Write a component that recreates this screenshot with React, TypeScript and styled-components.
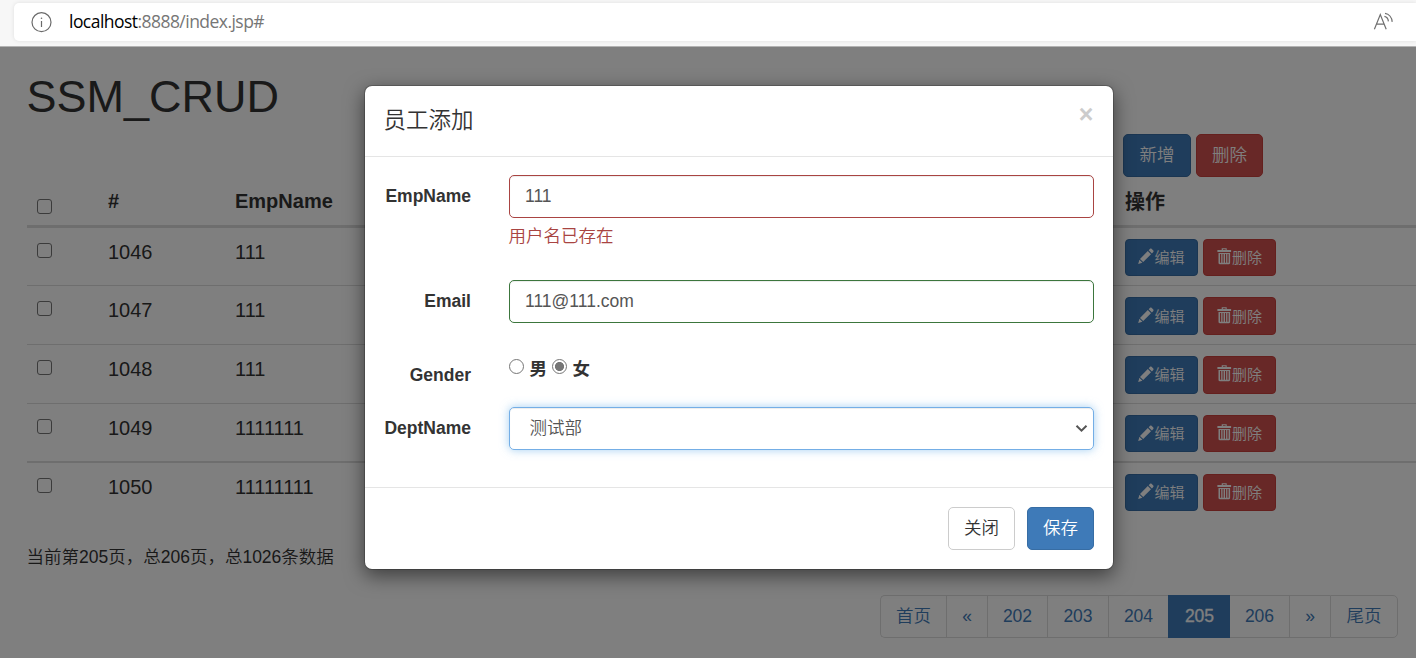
import React from "react";
import styled, { createGlobalStyle, css } from "styled-components";

const GlobalStyle = createGlobalStyle`
  * { box-sizing: border-box; }
  html, body { margin: 0; padding: 0; }
  body {
    width: 1416px;
    height: 658px;
    overflow: hidden;
    background: #fff;
    color: #333;
    font-family: "Liberation Sans", "Noto Sans CJK SC", sans-serif;
    font-size: 17.5px;
    line-height: 25px;
  }
  button, input { font-family: inherit; }
`;

type Tone = "primary" | "danger" | "plain";

const tones = {
  primary: css`background: #3e7ab8; border-color: #376da4; color: #fff;`,
  danger: css`background: #d1514f; border-color: #c9403d; color: #fff;`,
  plain: css`background: #fff; border-color: #ccc; color: #333;`,
};

const Window = styled.div`
  display: flex;
  flex-direction: column;
  width: 1416px;
  height: 658px;
  overflow: hidden;
`;

const BrowserBar = styled.header`
  flex: none;
  height: 47px;
  padding: 3px 0 0 14px;
  background: #f7f7f7;
  border-bottom: 1px solid #b3b3b3;
`;

const AddressField = styled.div`
  display: flex;
  align-items: center;
  height: 38px;
  padding: 0 22px 0 17px;
  background: #fff;
  border-radius: 5px 0 0 5px;
  box-shadow: 0 0 4px rgba(0, 0, 0, 0.1);
`;

const Url = styled.span`
  flex: 1;
  margin: -2px 0 0 17px;
  font-family: "Open Sans", sans-serif;
  font-size: 17.5px;
  letter-spacing: -0.54px;
  color: #767676;
  b { font-weight: 400; color: #000; }
`;

const Viewport = styled.main`
  position: relative;
  flex: 1;
  overflow: hidden;
`;

const Page = styled.div`
  padding: 25px 0 0 27px;
`;

const PageTitle = styled.h1`
  margin: 0 0 0 -0.5px;
  height: 62px;
  font-size: 45px;
  font-weight: 400;
  line-height: 49.5px;
`;

const PageActions = styled.div`
  display: flex;
  gap: 5px;
  padding-left: 1096px;
`;

const Button = styled.button<{ $tone: Tone; $wide?: boolean }>`
  width: ${(p) => (p.$wide ? 68 : 67)}px;
  height: 43px;
  padding: 0 0 1px;
  border: 1px solid;
  border-radius: 5px;
  font-size: 17.5px;
  line-height: 25px;
  font-weight: 350;
  ${(p) => tones[p.$tone]}
`;

const SmallButton = styled(Button)`
  display: flex;
  align-items: center;
  justify-content: center;
  width: 73px;
  height: 37.5px;
  padding: 0;
  border-radius: 4px;
  font-size: 15px;
  svg { margin-top: -2px; }
`;

const columns = css`
  display: grid;
  grid-template-columns: 71px 127px 890px 1fr;
  font-size: 20px;
  line-height: 28.5px;
`;

const HeadRow = styled.div`
  ${columns}
  height: 51px;
  padding-top: 10px;
  border-bottom: 3px solid #ddd;
  font-weight: 700;
`;

const Row = styled.div<{ $first?: boolean; $thick?: boolean }>`
  ${columns}
  height: ${(p) => (p.$first ? 57 : 58.75)}px;
  padding-top: ${(p) => (p.$first ? 9.5 : p.$thick ? 9.25 : 10.25)}px;
  border-top: ${(p) => (p.$first ? 0 : p.$thick ? 2 : 1)}px solid #ddd;
`;

const Cell = styled.div`
  padding-left: 10px;
`;

const ActionsHeading = styled(Cell)`
  padding-top: 1px;
`;

const CheckBox = styled.input.attrs({ type: "checkbox" })<{ $head?: boolean }>`
  display: block;
  appearance: none;
  width: 15px;
  height: 15px;
  margin: ${(p) => (p.$head ? 12 : 5)}px 0 0;
  background: #fff;
  border: 1px solid #767676;
  border-radius: 3px;
`;

const RowActions = styled(Cell)`
  display: flex;
  gap: 5px;
  padding-top: 1.2px;
`;

const Summary = styled.p`
  margin: 25px 0 0 -0.5px;
  height: 50px;
  font-weight: 350;
`;

const Pagination = styled.nav`
  display: flex;
  width: 518px;
  margin: 0 0 0 853px;
`;

const PageLink = styled.a<{ $w: number; $active?: boolean }>`
  width: ${(p) => p.$w}px;
  height: 43px;
  line-height: 41px;
  text-align: center;
  font-weight: 350;
  color: #3e7ab8;
  border: 1px solid #ddd;
  border-right-width: 0;
  &:first-child { border-radius: 5px 0 0 5px; }
  &:last-child { border-radius: 0 5px 5px 0; border-right-width: 1px; }
  ${(p) =>
    p.$active &&
    css`
      background: #3e7ab8;
      border-color: #3e7ab8;
      color: #fff;
      -webkit-text-stroke: 0.3px #fff;
      & + a { border-left-width: 0; }
    `}
`;

const Backdrop = styled.div`
  position: absolute;
  inset: 0;
  display: flex;
  align-items: flex-start;
  padding: 38px 0 0 364px;
  background: rgba(0, 0, 0, 0.5);
`;

const Modal = styled.section`
  width: 750px;
  background: #fff;
  background-clip: padding-box;
  border: 1px solid rgba(0, 0, 0, 0.2);
  border-radius: 8px;
  box-shadow: 0 6px 19px rgba(0, 0, 0, 0.5);
`;

const ModalHeader = styled.div`
  display: flex;
  justify-content: space-between;
  height: 71px;
  padding: 19px 19px 0 18.5px;
  border-bottom: 1px solid #e5e5e5;
`;

const ModalTitle = styled.h4`
  margin: 0;
  font-size: 22.5px;
  font-weight: 350;
  line-height: 32px;
`;

const Close = styled.button`
  width: 16px;
  height: 26px;
  margin-top: -4px;
  padding: 0;
  border: 0;
  background: none;
  color: #ccc;
  font-size: 25px;
  font-weight: 700;
  line-height: 26px;
`;

const Form = styled.form`
  height: 330px;
  padding: 18px 19px 0;
`;

const Field = styled.div<{ $h: number }>`
  display: flex;
  height: ${(p) => p.$h}px;
`;

const Label = styled.label<{ $drop?: boolean }>`
  width: 87px;
  margin-right: 38px;
  padding-top: ${(p) => (p.$drop ? 10 : 9)}px;
  text-align: right;
  font-weight: 700;
`;

const Control = styled.div`
  flex: 1;
`;

const TextInput = styled.input<{ $color: string }>`
  display: block;
  width: 100%;
  height: 43px;
  padding: 0 15px;
  border: 1px solid ${(p) => p.$color};
  border-radius: 5px;
  box-shadow: inset 0 1px 1px rgba(0, 0, 0, 0.075);
  color: #555;
  font-size: 17.5px;
`;

const HelpText = styled.span`
  display: block;
  margin: 6px 0 0 -0.5px;
  color: #a94442;
  font-weight: 350;
`;

const RadioGroup = styled.div`
  display: flex;
  height: 25px;
  margin-top: 4px;
  font-weight: 700;
`;

const RadioOption = styled.label`
  display: flex;
  width: 43px;
`;

const Radio = styled.input.attrs({ type: "radio" })`
  appearance: none;
  flex: none;
  width: 15px;
  height: 15px;
  margin: 2px 5.5px 0 0;
  border: 1px solid #767676;
  border-radius: 50%;
  &:checked { background: radial-gradient(circle, #767676 4.2px, #fff 4.9px); }
`;

const Select = styled.div`
  display: flex;
  align-items: center;
  justify-content: space-between;
  height: 43px;
  padding: 0 5px 1px 19.5px;
  border: 1px solid #74aee6;
  border-radius: 5px;
  box-shadow: inset 0 1px 1px rgba(0, 0, 0, 0.075), 0 0 10px rgba(102, 175, 233, 0.6);
  color: #555;
  font-weight: 350;
`;

const ModalFooter = styled.div`
  display: flex;
  justify-content: flex-end;
  gap: 12px;
  height: 82px;
  padding: 19px 19px 0;
  border-top: 1px solid #e5e5e5;
`;

const InfoIcon = () => (
  <svg width="21" height="21" viewBox="0 0 21 21" fill="none" stroke="#6a6a6a" strokeWidth="1.2">
    <circle cx="10.5" cy="10.2" r="9.5" />
    <path d="M10.5 9v6" />
    <circle cx="10.5" cy="6.3" r=".8" fill="#6a6a6a" stroke="none" />
  </svg>
);

const ReadAloudIcon = () => (
  <svg width="21" height="20" viewBox="0 0 21 20" fill="none" stroke="#6f6f6f" strokeWidth="1.2">
    <path d="M1.4 17.3 7.3 2.6l5.9 14.7M3.4 12.2h7.8" />
    <path d="M11.4 4.4c2.2.5 3.8 2.4 4 5M12 1.3c3.9.6 6.9 4 7.2 8.6" />
  </svg>
);

const PencilIcon = () => (
  <svg width="16" height="16" viewBox="0 0 16 16" fill="currentColor">
    <path d="M12.1.8c.4-.4 1-.4 1.4 0l1.8 1.8c.4.4.4 1 0 1.4l-1.4 1.4-3.2-3.2zM9.8 3.1 13 6.3l-7.8 7.8L2 10.9zM1.4 11.7l3 3L.2 15.9z" />
  </svg>
);

const TrashIcon = () => (
  <svg width="15" height="17" viewBox="0 0 15 17" fill="currentColor" fillRule="evenodd">
    <path d="M.4 2h4.3V.3h5V2h4.4v2H.4zM5.9 1.3V2h2.7v-.7zM1.5 5h11.6v10c0 .7-.5 1.2-1.2 1.2H2.7c-.7 0-1.2-.5-1.2-1.2zM3 6v8.8h1.2V6zm2.5 0v8.8h1.1V6zM8 6v8.8h1.1V6zm2.4 0v8.8h1.2V6z" />
  </svg>
);

const Chevron = () => (
  <svg width="13" height="9" viewBox="0 0 13 9" fill="none" stroke="#555" strokeWidth="2">
    <path d="m1.5 1.7 5 5 5-5" />
  </svg>
);

const employees = [
  { id: 1046, name: "111" },
  { id: 1047, name: "111" },
  { id: 1048, name: "111" },
  { id: 1049, name: "1111111" },
  { id: 1050, name: "11111111" },
];

const pages = [
  { label: "首页", w: 66 },
  { label: "«", w: 41 },
  { label: "202", w: 60 },
  { label: "203", w: 61 },
  { label: "204", w: 60 },
  { label: "205", w: 62, active: true },
  { label: "206", w: 59 },
  { label: "»", w: 41 },
  { label: "尾页", w: 68 },
];

export default function App() {
  return (
    <Window>
      <GlobalStyle />
      <BrowserBar>
        <AddressField>
          <InfoIcon />
          <Url><b>localhost</b>:8888/index.jsp#</Url>
          <ReadAloudIcon />
        </AddressField>
      </BrowserBar>
      <Viewport>
        <Page>
          <PageTitle>SSM_CRUD</PageTitle>
          <PageActions>
            <Button $tone="primary" $wide>新增</Button>
            <Button $tone="danger">删除</Button>
          </PageActions>
          <HeadRow>
            <Cell><CheckBox $head /></Cell>
            <Cell>#</Cell>
            <Cell>EmpName</Cell>
            <ActionsHeading>操作</ActionsHeading>
          </HeadRow>
          {employees.map((e, i) => (
            <Row key={e.id} $first={i === 0} $thick={i === 4}>
              <Cell><CheckBox /></Cell>
              <Cell>{e.id}</Cell>
              <Cell>{e.name}</Cell>
              <RowActions>
                <SmallButton $tone="primary"><PencilIcon />编辑</SmallButton>
                <SmallButton $tone="danger"><TrashIcon />删除</SmallButton>
              </RowActions>
            </Row>
          ))}
          <Summary>当前第205页，总206页，总1026条数据</Summary>
          <Pagination>
            {pages.map((p) => (
              <PageLink key={p.label} $w={p.w} $active={p.active}>{p.label}</PageLink>
            ))}
          </Pagination>
        </Page>
        <Backdrop>
          <Modal>
            <ModalHeader>
              <ModalTitle>员工添加</ModalTitle>
              <Close>×</Close>
            </ModalHeader>
            <Form>
              <Field $h={105}>
                <Label>EmpName</Label>
                <Control>
                  <TextInput $color="#a94442" defaultValue="111" />
                  <HelpText>用户名已存在</HelpText>
                </Control>
              </Field>
              <Field $h={73}>
                <Label>Email</Label>
                <Control>
                  <TextInput $color="#3c763d" defaultValue="111@111.com" />
                </Control>
              </Field>
              <Field $h={54}>
                <Label $drop>Gender</Label>
                <Control>
                  <RadioGroup>
                    <RadioOption><Radio name="gender" />男</RadioOption>
                    <RadioOption><Radio name="gender" defaultChecked />女</RadioOption>
                  </RadioGroup>
                </Control>
              </Field>
              <Field $h={43}>
                <Label>DeptName</Label>
                <Control>
                  <Select>测试部<Chevron /></Select>
                </Control>
              </Field>
            </Form>
            <ModalFooter>
              <Button $tone="plain">关闭</Button>
              <Button $tone="primary">保存</Button>
            </ModalFooter>
          </Modal>
        </Backdrop>
      </Viewport>
    </Window>
  );
}
